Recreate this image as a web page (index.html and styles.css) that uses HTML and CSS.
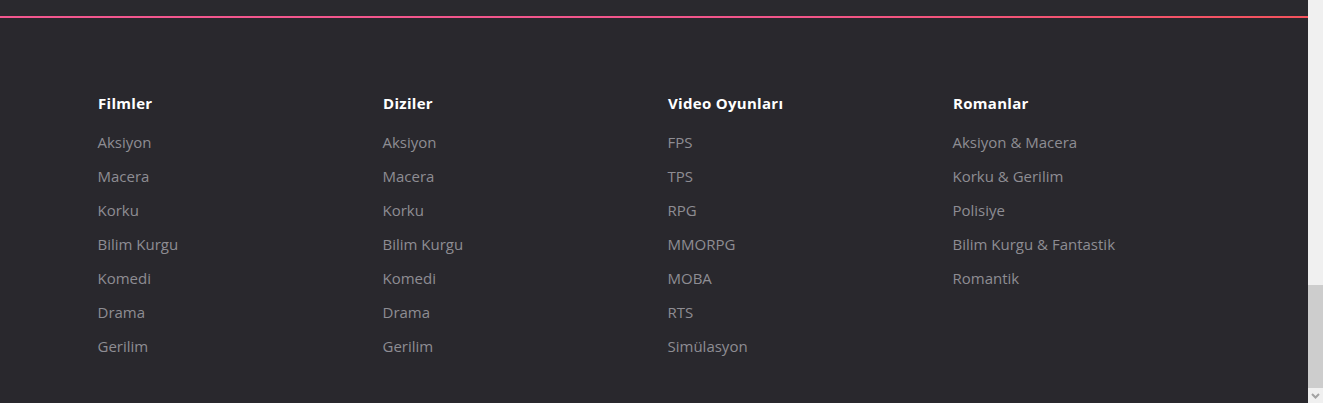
FILE: index.html
```html
<!DOCTYPE html>
<html lang="tr">
<head>
<meta charset="utf-8">
<title>Footer</title>
<link rel="stylesheet" href="styles.css">
</head>
<body>
<div class="page">
  <div class="topbar"></div>
  <div class="accent"></div>
  <footer class="footer">
    <div class="col">
      <h4 class="col-title">Filmler</h4>
      <ul class="links">
        <li><a href="#">Aksiyon</a></li>
        <li><a href="#">Macera</a></li>
        <li><a href="#">Korku</a></li>
        <li><a href="#">Bilim Kurgu</a></li>
        <li><a href="#">Komedi</a></li>
        <li><a href="#">Drama</a></li>
        <li><a href="#">Gerilim</a></li>
      </ul>
    </div>
    <div class="col">
      <h4 class="col-title">Diziler</h4>
      <ul class="links">
        <li><a href="#">Aksiyon</a></li>
        <li><a href="#">Macera</a></li>
        <li><a href="#">Korku</a></li>
        <li><a href="#">Bilim Kurgu</a></li>
        <li><a href="#">Komedi</a></li>
        <li><a href="#">Drama</a></li>
        <li><a href="#">Gerilim</a></li>
      </ul>
    </div>
    <div class="col">
      <h4 class="col-title">Video Oyunları</h4>
      <ul class="links">
        <li><a href="#">FPS</a></li>
        <li><a href="#">TPS</a></li>
        <li><a href="#">RPG</a></li>
        <li><a href="#">MMORPG</a></li>
        <li><a href="#">MOBA</a></li>
        <li><a href="#">RTS</a></li>
        <li><a href="#">Simülasyon</a></li>
      </ul>
    </div>
    <div class="col">
      <h4 class="col-title">Romanlar</h4>
      <ul class="links">
        <li><a href="#">Aksiyon &amp; Macera</a></li>
        <li><a href="#">Korku &amp; Gerilim</a></li>
        <li><a href="#">Polisiye</a></li>
        <li><a href="#">Bilim Kurgu &amp; Fantastik</a></li>
        <li><a href="#">Romantik</a></li>
      </ul>
    </div>
  </footer>
</div>
<div class="scrollbar">
  <div class="scroll-thumb"></div>
  <div class="scroll-arrow">
    <svg width="15" height="15" viewBox="0 0 15 15"><path d="M4 6 L7.5 9.5 L11 6" fill="none" stroke="#a3a3a3" stroke-width="2"/></svg>
  </div>
</div>
</body>
</html>
```

FILE: styles.css
```css
html, body {
  margin: 0;
  padding: 0;
  height: 100%;
  overflow: hidden;
  background: #29282d;
}
.page {
  width: 1308px;
  height: 403px;
  background: #29282d;
  font-family: "Open Sans", "Liberation Sans", sans-serif;
}
.topbar {
  height: 16px;
  background: #2a292e;
}
.accent {
  height: 2px;
  background: linear-gradient(90deg, #f2578f 0%, #f1558a 60%, #f4525c 100%);
}
.footer {
  display: grid;
  grid-template-columns: repeat(4, 285px);
  padding: 75px 0 0 98px;
}
.col-title {
  margin: 0 0 18px;
  font-family: "Open Sans", "Liberation Sans", sans-serif;
  font-weight: 700;
  font-size: 15px;
  line-height: 20px;
  color: #ffffff;
  letter-spacing: 0.3px;
}
.links {
  list-style: none;
  margin: 0 0 0 -0.5px;
  padding: 0;
  display: flex;
  flex-direction: column;
  gap: 12px;
}
.links li {
  line-height: 22px;
  font-size: 15px;
}
.links a {
  color: #8e8d93;
  text-decoration: none;
}
.scrollbar {
  position: absolute;
  top: 0;
  right: 0;
  width: 15px;
  height: 403px;
  background: #f0f0f0;
}
.scroll-thumb {
  position: absolute;
  left: 0;
  top: 285px;
  width: 15px;
  height: 103px;
  background: #cdcdcd;
}
.scroll-arrow {
  position: absolute;
  left: 0;
  bottom: 0;
  width: 15px;
  height: 15px;
  background: #f0f0f0;
}
.scroll-arrow svg {
  display: block;
}
```
